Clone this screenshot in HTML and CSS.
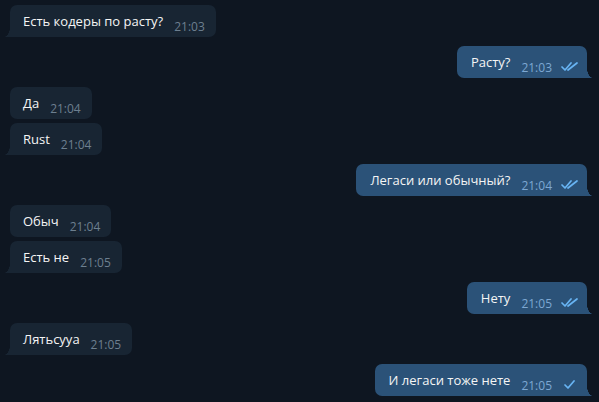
FILE: index.html
```html
<!DOCTYPE html>
<html lang="ru">
<head>
<meta charset="utf-8">
<link rel="stylesheet" href="styles.css">
</head>
<body>
<div class="chat">
  <div class="group in">
    <div class="bubble tail"><span class="text">Есть кодеры по расту?</span><span class="time">21:03</span></div>
  </div>
  <div class="group out">
    <div class="bubble tail"><span class="text">Расту?</span><span class="time">21:03</span><svg class="check" viewBox="0 0 17 9"><path d="M1 5 L4 8 L10 1 M7 8 L16 1" /></svg></div>
  </div>
  <div class="group in">
    <div class="bubble"><span class="text">Да</span><span class="time">21:04</span></div>
    <div class="bubble tail"><span class="text">Rust</span><span class="time">21:04</span></div>
  </div>
  <div class="group out">
    <div class="bubble tail"><span class="text">Легаси или обычный?</span><span class="time">21:04</span><svg class="check" viewBox="0 0 17 9"><path d="M1 5 L4 8 L10 1 M7 8 L16 1" /></svg></div>
  </div>
  <div class="group in">
    <div class="bubble"><span class="text">Обыч</span><span class="time">21:04</span></div>
    <div class="bubble tail"><span class="text">Есть не</span><span class="time">21:05</span></div>
  </div>
  <div class="group out">
    <div class="bubble tail"><span class="text">Нету</span><span class="time">21:05</span><svg class="check" viewBox="0 0 17 9"><path d="M1 5 L4 8 L10 1 M7 8 L16 1" /></svg></div>
  </div>
  <div class="group in">
    <div class="bubble tail"><span class="text">Лятьсууа</span><span class="time">21:05</span></div>
  </div>
  <div class="group out">
    <div class="bubble tail"><span class="text">И легаси тоже нете</span><span class="time">21:05</span><svg class="check" viewBox="0 0 17 9"><path d="M4 5 L7 8 L13 1" /></svg></div>
  </div>
</div>
</body>
</html>
```
FILE: styles.css
```css
html, body {
  margin: 0;
  padding: 0;
  background: #0e1621;
  font-family: "Open Sans", "Noto Sans", sans-serif;
  width: 599px;
  height: 402px;
  overflow: hidden;
}

.chat {
  display: flex;
  flex-direction: column;
  gap: 9px;
  padding: 5px 12px 0 10px;
}

.group {
  display: flex;
  flex-direction: column;
  gap: 4px;
}

.group.in { align-items: flex-start; }
.group.out { align-items: flex-end; }

.bubble {
  position: relative;
  display: flex;
  align-items: flex-end;
  height: 32px;
  box-sizing: border-box;
  padding: 6px 11px 6px 13px;
  border-radius: 7px;
  background: #182533;
  color: #f5f5f5;
}

.out .bubble {
  background: #2b5278;
  padding-left: 14px;
  padding-right: 9px;
}

.text {
  font-size: 13px;
  line-height: 20px;
  align-self: flex-start;
}

.time {
  font-size: 12px;
  line-height: 14px;
  margin-left: 11px;
  margin-bottom: -3px;
  color: #6d7f8f;
}

.out .time { color: #7da8d3; }

.check {
  width: 17px;
  height: 9px;
  margin-left: 9px;
  margin-bottom: 1px;
  fill: none;
  stroke: #68b4f3;
  stroke-width: 1.7;
  stroke-linecap: round;
  stroke-linejoin: round;
}

.in .bubble.tail { border-bottom-left-radius: 0; }
.out .bubble.tail { border-bottom-right-radius: 0; }

.in .bubble.tail::before,
.out .bubble.tail::after {
  content: "";
  position: absolute;
  bottom: 0;
  width: 6px;
  height: 10px;
}

.in .bubble.tail::before {
  left: -6px;
  background: #182533;
  -webkit-mask-image: radial-gradient(6px 10px at 0 0, transparent 97%, #000 100%);
  mask-image: radial-gradient(6px 10px at 0 0, transparent 97%, #000 100%);
}

.out .bubble.tail::after {
  right: -6px;
  background: #2b5278;
  -webkit-mask-image: radial-gradient(6px 10px at 100% 0, transparent 97%, #000 100%);
  mask-image: radial-gradient(6px 10px at 100% 0, transparent 97%, #000 100%);
}
```
